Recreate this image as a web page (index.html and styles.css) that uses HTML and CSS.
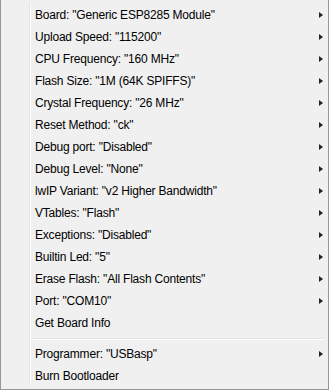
FILE: index.html
```html
<!DOCTYPE html>
<html lang="en">
<head>
    <meta charset="UTF-8">
    <meta name="viewport" content="width=device-width, initial-scale=1.0">
    <title>Tools</title>
    <link rel="stylesheet" href="styles.css">
</head>
<body>
    <div class="menu">
        <ul class="list">
            <li class="item sub">Board: "Generic ESP8285 Module"</li>
            <li class="item sub">Upload Speed: "115200"</li>
            <li class="item sub">CPU Frequency: "160 MHz"</li>
            <li class="item sub">Flash Size: "1M (64K SPIFFS)"</li>
            <li class="item sub">Crystal Frequency: "26 MHz"</li>
            <li class="item sub">Reset Method: "ck"</li>
            <li class="item sub">Debug port: "Disabled"</li>
            <li class="item sub">Debug Level: "None"</li>
            <li class="item sub">lwIP Variant: "v2 Higher Bandwidth"</li>
            <li class="item sub">VTables: "Flash"</li>
            <li class="item sub">Exceptions: "Disabled"</li>
            <li class="item sub">Builtin Led: "5"</li>
            <li class="item sub">Erase Flash: "All Flash Contents"</li>
            <li class="item sub">Port: "COM10"</li>
            <li class="item">Get Board Info</li>
            <!-- separator -->
            <li class="sep"></li>
            <li class="item sub">Programmer: "USBasp"</li>
            <li class="item">Burn Bootloader</li>
        </ul>
    </div>
</body>
</html>
```

FILE: styles.css
```css
body {
    margin: 0;
    padding: 0;
    font-family: "Segoe UI", "Liberation Sans", Arial, sans-serif;
    font-size: 12px;
    letter-spacing: -0.2px;
    color: #000;
}
.menu {
    width: 329px;
    height: 390px;
    box-sizing: border-box;
    background-color: #f0f0f0;
    border: 1px solid #979797;
    border-top: none;
    padding: 4px 2px 0 0;
}
.list {
    list-style: none;
    margin: 0;
    padding: 0;
    height: 380px;
    background-image: linear-gradient(to right, transparent 28px, #e2e3e3 28px, #e2e3e3 29px, #fff 29px, #fff 30px, transparent 30px);
}
.item {
    position: relative;
    height: 22px;
    line-height: 22px;
    padding-left: 34px;
    white-space: nowrap;
}
.sub::after {
    content: "";
    position: absolute;
    right: 3px;
    top: 8px;
    border-left: 4px solid #222;
    border-top: 3.5px solid transparent;
    border-bottom: 3.5px solid transparent;
}
.sep {
    height: 9px;
    margin-left: 30px;
    margin-right: 1px;
    background-image: linear-gradient(to bottom, transparent 4px, #e2e3e3 4px, #e2e3e3 5px, #fff 5px, #fff 6px, transparent 6px);
}
```
